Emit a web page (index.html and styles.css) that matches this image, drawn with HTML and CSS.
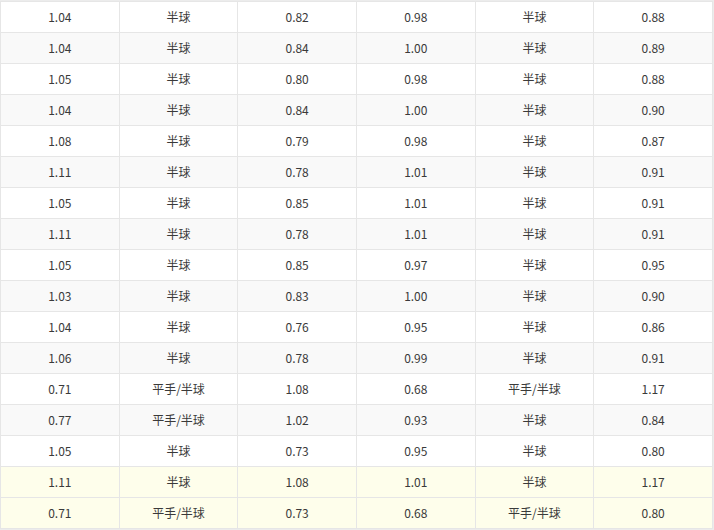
FILE: index.html
```html
<!DOCTYPE html>
<html lang="zh">
<head>
<meta charset="utf-8">
<link rel="stylesheet" href="styles.css">
</head>
<body>
<table class="odds">
<tbody>
<tr><td>1.04</td><td>半球</td><td>0.82</td><td>0.98</td><td>半球</td><td>0.88</td></tr>
<tr><td>1.04</td><td>半球</td><td>0.84</td><td>1.00</td><td>半球</td><td>0.89</td></tr>
<tr><td>1.05</td><td>半球</td><td>0.80</td><td>0.98</td><td>半球</td><td>0.88</td></tr>
<tr><td>1.04</td><td>半球</td><td>0.84</td><td>1.00</td><td>半球</td><td>0.90</td></tr>
<tr><td>1.08</td><td>半球</td><td>0.79</td><td>0.98</td><td>半球</td><td>0.87</td></tr>
<tr><td>1.11</td><td>半球</td><td>0.78</td><td>1.01</td><td>半球</td><td>0.91</td></tr>
<tr><td>1.05</td><td>半球</td><td>0.85</td><td>1.01</td><td>半球</td><td>0.91</td></tr>
<tr><td>1.11</td><td>半球</td><td>0.78</td><td>1.01</td><td>半球</td><td>0.91</td></tr>
<tr><td>1.05</td><td>半球</td><td>0.85</td><td>0.97</td><td>半球</td><td>0.95</td></tr>
<tr><td>1.03</td><td>半球</td><td>0.83</td><td>1.00</td><td>半球</td><td>0.90</td></tr>
<tr><td>1.04</td><td>半球</td><td>0.76</td><td>0.95</td><td>半球</td><td>0.86</td></tr>
<tr><td>1.06</td><td>半球</td><td>0.78</td><td>0.99</td><td>半球</td><td>0.91</td></tr>
<tr><td>0.71</td><td>平手/半球</td><td>1.08</td><td>0.68</td><td>平手/半球</td><td>1.17</td></tr>
<tr><td>0.77</td><td>平手/半球</td><td>1.02</td><td>0.93</td><td>半球</td><td>0.84</td></tr>
<tr><td>1.05</td><td>半球</td><td>0.73</td><td>0.95</td><td>半球</td><td>0.80</td></tr>
<tr class="hl"><td>1.11</td><td>半球</td><td>1.08</td><td>1.01</td><td>半球</td><td>1.17</td></tr>
<tr class="hl"><td>0.71</td><td>平手/半球</td><td>0.73</td><td>0.68</td><td>平手/半球</td><td>0.80</td></tr>
</tbody>
</table>
</body>
</html>
```
FILE: styles.css
```css
html, body {
  margin: 0;
  padding: 0;
  background: #ececec;
}
body {
  padding-top: 1px;
}
.odds {
  border-collapse: collapse;
  width: 713px;
  table-layout: fixed;
  font-family: "Noto Sans CJK SC", "Noto Sans", sans-serif;
  font-size: 12px;
  color: #3a3a3a;
  background: #fff;
}
.odds td {
  height: 30px;
  padding: 0;
  text-align: center;
  vertical-align: middle;
  border: 1px solid #e6e6e6;
  line-height: 30px;
}
.odds tr:nth-child(even) {
  background: #f9f9f9;
}
.odds tr.hl {
  background: #fefeeb;
}
```
